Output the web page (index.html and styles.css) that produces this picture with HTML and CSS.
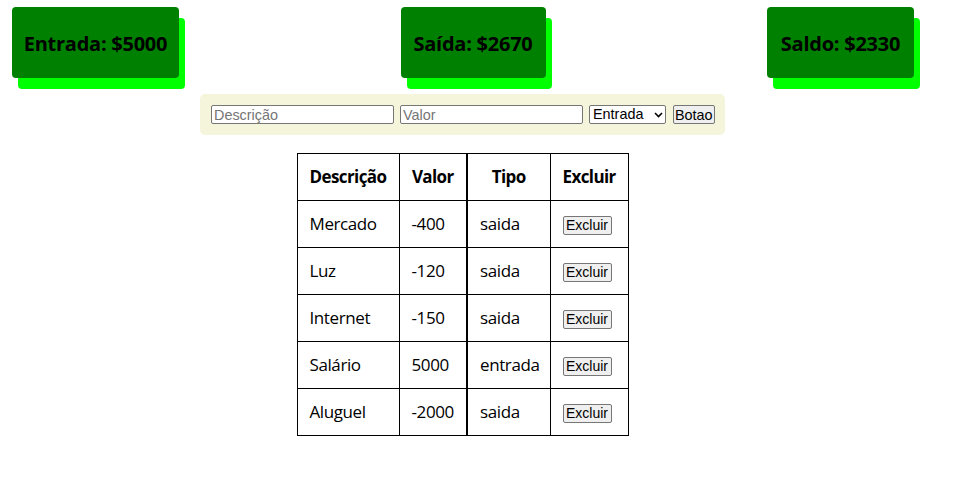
FILE: index.html
```html
<!DOCTYPE html>
<html lang="pt-BR">
<head>
<meta charset="utf-8">
<title>Finanças</title>
<link rel="stylesheet" href="styles.css">
</head>
<body>
<div class="app">
  <div class="cards">
    <div class="card card-entrada">Entrada: $5000</div>
    <div class="card card-saida">Saída: $2670</div>
    <div class="card card-saldo">Saldo: $2330</div>
  </div>
  <form class="form">
    <input class="field" type="text" placeholder="Descrição">
    <input class="field" type="text" placeholder="Valor">
    <span class="select-wrap">
      <select class="select">
        <option>Entrada</option>
        <option>Saida</option>
      </select>
      <svg class="chev" width="9" height="6" viewBox="0 0 9 6"><path d="M1 1l3.5 3.5L8 1" fill="none" stroke="#000" stroke-width="1.6"/></svg>
    </span>
    <button class="btn" type="button">Botao</button>
  </form>
  <table class="tabela">
    <colgroup>
      <col class="c1"><col class="c2"><col class="c3"><col class="c4">
    </colgroup>
    <thead>
      <tr><th>Descrição</th><th>Valor</th><th class="tipo">Tipo</th><th>Excluir</th></tr>
    </thead>
    <tbody>
      <tr><td>Mercado</td><td>-400</td><td class="tipo">saida</td><td><button class="btn" type="button">Excluir</button></td></tr>
      <tr><td>Luz</td><td>-120</td><td class="tipo">saida</td><td><button class="btn" type="button">Excluir</button></td></tr>
      <tr><td>Internet</td><td>-150</td><td class="tipo">saida</td><td><button class="btn" type="button">Excluir</button></td></tr>
      <tr><td>Salário</td><td>5000</td><td class="tipo">entrada</td><td><button class="btn" type="button">Excluir</button></td></tr>
      <tr><td>Aluguel</td><td>-2000</td><td class="tipo">saida</td><td><button class="btn" type="button">Excluir</button></td></tr>
    </tbody>
  </table>
</div>
</body>
</html>
```
FILE: styles.css
```css
* { box-sizing: border-box; }
body {
  margin: 0;
  font-family: "Open Sans", "Noto Sans", sans-serif;
  color: #000;
  background: #fff;
}
.app {
  width: 925px;
  display: flex;
  flex-direction: column;
  align-items: center;
}
.cards {
  align-self: stretch;
  display: flex;
  justify-content: space-between;
  padding: 7px 11px 0 12px;
}
.card {
  background: #008000;
  box-shadow: 6px 11px 0 #00ff00;
  border-radius: 4px;
  height: 71px;
  display: flex;
  align-items: center;
  justify-content: center;
  padding-top: 2px;
  font-size: 20px;
  font-weight: 700;
  letter-spacing: -0.25px;
}
.card-entrada { width: 167px; }
.card-saida { width: 145px; }
.card-saldo { width: 147px; }
.form {
  margin-top: 16px;
  width: 525px;
  height: 41px;
  background: #f5f5dc;
  border-radius: 5px;
  padding: 0 11px;
  display: flex;
  align-items: center;
  gap: 6px;
}
.field, .select, .btn {
  font-family: "Liberation Sans", Arial, sans-serif;
  font-size: 14.4px;
  height: 19px;
  color: #000;
}
.field {
  width: 183px;
  border: 1px solid #767676;
  border-radius: 2px;
  padding: 0 2px;
  background: #fff;
}
.field::placeholder { color: #757575; }
.select-wrap {
  position: relative;
  display: inline-flex;
}
.select {
  appearance: none;
  -webkit-appearance: none;
  width: 77px;
  border: 1px solid #767676;
  border-radius: 2px;
  background: #fff;
  padding: 0 0 0 3px;
  line-height: 17px;
}
.chev {
  position: absolute;
  right: 3px;
  top: 7px;
  pointer-events: none;
}
.form .btn { margin-left: 1px; }
.btn {
  border: 1px solid #767676;
  border-radius: 2px;
  background: #efefef;
  padding: 0 1px;
  cursor: pointer;
}
.tabela {
  margin-top: 18px;
  width: 331px;
  table-layout: fixed;
  border-collapse: collapse;
  font-size: 17px;
}
.c1 { width: 102px; }
.c2 { width: 68px; }
.c3 { width: 83px; }
.c4 { width: 78px; }
.tabela th, .tabela td {
  border: 1px solid #000;
  padding: 12px 12px;
  height: 47px;
  line-height: 22px;
  white-space: nowrap;
  letter-spacing: -0.4px;
}
.tabela th { font-weight: 700; text-align: center; letter-spacing: -0.6px; }
.tabela td { text-align: left; font-weight: 400; }
.tabela .tipo { border-left-width: 2px; }
.tabela td .btn { width: 49px; padding: 0; letter-spacing: 0; font-size: 14px; }
```
